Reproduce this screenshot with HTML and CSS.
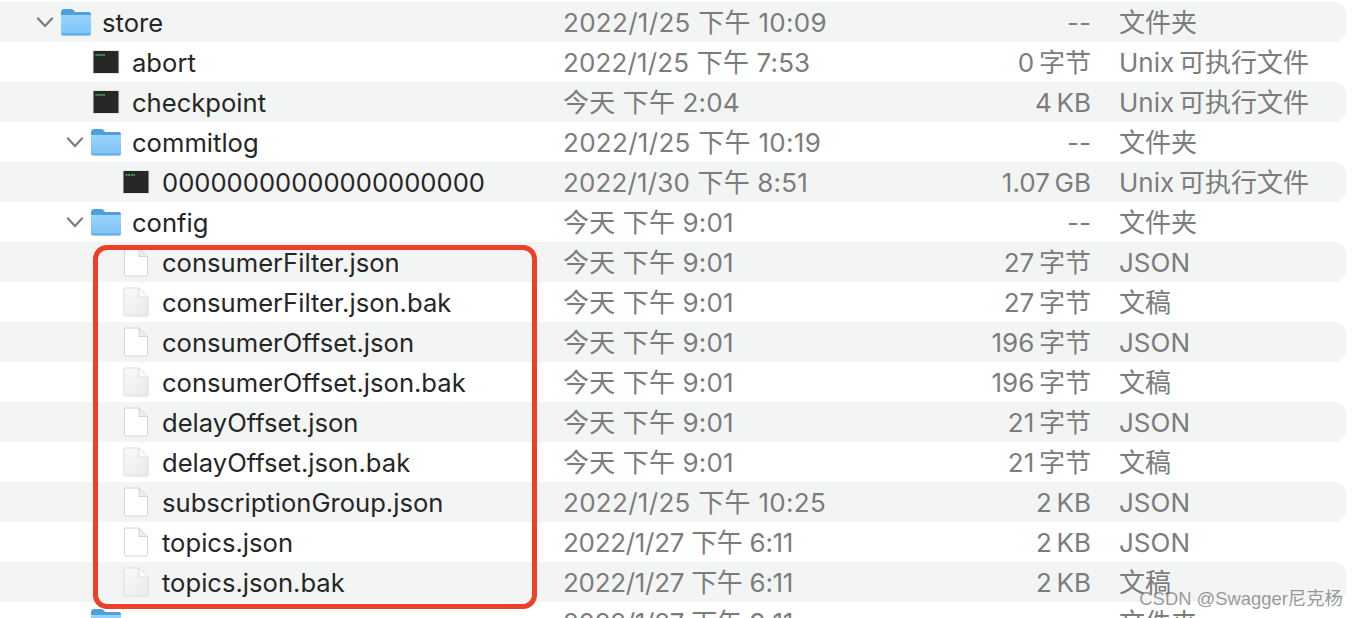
FILE: index.html
```html
<!DOCTYPE html>
<html lang="zh-CN">
<head>
  <meta charset="UTF-8" />
  <title>store</title>
  <meta name="viewport" content="width=device-width, initial-scale=1.0" />
  <link rel="stylesheet" href="styles.css">
</head>
<body>
  <svg class="defs" width="0" height="0">
    <defs>
      <linearGradient id="folderBody" x1="0" y1="0" x2="0" y2="1">
        <stop offset="0" stop-color="#97d4fc" />
        <stop offset="1" stop-color="#7cc4f7" />
      </linearGradient>
      <linearGradient id="bakPage" x1="0" y1="0" x2="1" y2="1">
        <stop offset="0" stop-color="#fbfbfb" />
        <stop offset="1" stop-color="#e9e9e9" />
      </linearGradient>
      <symbol id="chevron" viewBox="0 0 18 12">
        <path d="M2 2.5 L9 10 L16 2.5" fill="none" stroke="#808080" stroke-width="2.4" stroke-linecap="round" stroke-linejoin="round" />
      </symbol>
      <symbol id="folder" viewBox="0 0 32 30">
        <path d="M1 6 Q1 2 4 2 H11 Q13 2 14 3.500 L15 5 H29 Q31 5 31 8 V14 H1 Z" fill="#4f9fe0" />
        <path d="M1 8 H31 V26 Q31 28.500 28.500 28.500 H3.500 Q1 28.500 1 26 Z" fill="url(#folderBody)" />
        <path d="M1 26 H31 Q31 28.500 28.500 28.500 H3.500 Q1 28.500 1 26 Z" fill="#69b1ea" />
      </symbol>
      <symbol id="exec" viewBox="0 0 30 26">
        <rect x="1.500" y="1" width="27" height="24" fill="#e6e6e6" />
        <rect x="2.500" y="2" width="25" height="22" fill="#272727" />
        <path d="M4.500 6 H14" stroke="#58b85a" stroke-width="1.500" stroke-dasharray="2 .6" />
      </symbol>
      <symbol id="page" viewBox="0 0 26 30">
        <path d="M1.500 1 H16 L24.500 9.500 V27.500 Q24.500 29 23 29 H3 Q1.500 29 1.500 27.500 Z" fill="#fff" stroke="#d4d4d4" />
        <path d="M16 1 V9.500 H24.500 Z" fill="#ededed" stroke="#d4d4d4" stroke-linejoin="round" />
      </symbol>
      <symbol id="bak" viewBox="0 0 26 30">
        <path d="M1 1 H16 L25 10 V27.500 Q25 29 23.500 29 H2.500 Q1 29 1 27.500 Z" fill="url(#bakPage)" stroke="#dcdcdc" />
        <path d="M16 1 V10 H25 Z" fill="#fff" stroke="#dcdcdc" stroke-linejoin="round" />
      </symbol>
    </defs>
  </svg>

  <div class="list">
    <div class="row stripe depth0">
      <div class="name"><svg class="chevron"><use href="#chevron" /></svg><svg class="icon folder"><use href="#folder" /></svg><span>store</span></div>
      <div class="date wide">2022/1/25 下午 10:09</div><div class="size">--</div><div class="kind">文件夹</div>
    </div>
    <div class="row depth1">
      <div class="name"><svg class="icon exec"><use href="#exec" /></svg><span>abort</span></div>
      <div class="date">2022/1/25 下午 7:53</div><div class="size">0&#8201;字节</div><div class="kind">Unix&#8201;可执行文件</div>
    </div>
    <div class="row stripe depth1">
      <div class="name"><svg class="icon exec"><use href="#exec" /></svg><span>checkpoint</span></div>
      <div class="date">今天 下午 2:04</div><div class="size">4&#8201;KB</div><div class="kind">Unix&#8201;可执行文件</div>
    </div>
    <div class="row depth1">
      <div class="name"><svg class="chevron"><use href="#chevron" /></svg><svg class="icon folder"><use href="#folder" /></svg><span>commitlog</span></div>
      <div class="date wide">2022/1/25 下午 10:19</div><div class="size">--</div><div class="kind">文件夹</div>
    </div>
    <div class="row stripe depth2">
      <div class="name"><svg class="icon exec"><use href="#exec" /></svg><span>00000000000000000000</span></div>
      <div class="date">2022/1/30 下午 8:51</div><div class="size">1.07&#8201;GB</div><div class="kind">Unix&#8201;可执行文件</div>
    </div>
    <div class="row depth1">
      <div class="name"><svg class="chevron"><use href="#chevron" /></svg><svg class="icon folder"><use href="#folder" /></svg><span>config</span></div>
      <div class="date">今天 下午 9:01</div><div class="size">--</div><div class="kind">文件夹</div>
    </div>
    <div class="row stripe depth2">
      <div class="name"><svg class="icon page"><use href="#page" /></svg><span>consumerFilter.json</span></div>
      <div class="date">今天 下午 9:01</div><div class="size">27&#8201;字节</div><div class="kind">JSON</div>
    </div>
    <div class="row depth2">
      <div class="name"><svg class="icon page"><use href="#bak" /></svg><span>consumerFilter.json.bak</span></div>
      <div class="date">今天 下午 9:01</div><div class="size">27&#8201;字节</div><div class="kind">文稿</div>
    </div>
    <div class="row stripe depth2">
      <div class="name"><svg class="icon page"><use href="#page" /></svg><span>consumerOffset.json</span></div>
      <div class="date">今天 下午 9:01</div><div class="size">196&#8201;字节</div><div class="kind">JSON</div>
    </div>
    <div class="row depth2">
      <div class="name"><svg class="icon page"><use href="#bak" /></svg><span>consumerOffset.json.bak</span></div>
      <div class="date">今天 下午 9:01</div><div class="size">196&#8201;字节</div><div class="kind">文稿</div>
    </div>
    <div class="row stripe depth2">
      <div class="name"><svg class="icon page"><use href="#page" /></svg><span>delayOffset.json</span></div>
      <div class="date">今天 下午 9:01</div><div class="size">21&#8201;字节</div><div class="kind">JSON</div>
    </div>
    <div class="row depth2">
      <div class="name"><svg class="icon page"><use href="#bak" /></svg><span>delayOffset.json.bak</span></div>
      <div class="date">今天 下午 9:01</div><div class="size">21&#8201;字节</div><div class="kind">文稿</div>
    </div>
    <div class="row stripe depth2">
      <div class="name"><svg class="icon page"><use href="#page" /></svg><span>subscriptionGroup.json</span></div>
      <div class="date wide">2022/1/25 下午 10:25</div><div class="size">2&#8201;KB</div><div class="kind">JSON</div>
    </div>
    <div class="row depth2">
      <div class="name"><svg class="icon page"><use href="#page" /></svg><span>topics.json</span></div>
      <div class="date tight">2022/1/27 下午 6:11</div><div class="size">2&#8201;KB</div><div class="kind">JSON</div>
    </div>
    <div class="row stripe depth2">
      <div class="name"><svg class="icon page"><use href="#bak" /></svg><span>topics.json.bak</span></div>
      <div class="date tight">2022/1/27 下午 6:11</div><div class="size">2&#8201;KB</div><div class="kind">文稿</div>
    </div>
    <div class="row depth1">
      <div class="name"><svg class="icon folder"><use href="#folder" /></svg><span>consumequeue</span></div>
      <div class="date tight">2022/1/27 下午 9:11</div><div class="size">--</div><div class="kind">文件夹</div>
    </div>
  </div>

  <div class="redbox"></div>
  <div class="watermark">CSDN @Swagger尼克杨</div>
</body>
</html>
```

FILE: styles.css
```css
html, body {
  height: 100%;
}
body {
  font-family: Inter, "Noto Sans CJK SC", sans-serif;
  background: #fff;
  color: #262626;
  margin: 0;
  overflow: hidden;
  position: relative;
}
.defs {
  position: absolute;
}
.list {
  padding: 2px 12px 0 0;
}
.row {
  display: grid;
  grid-template-columns: 563px 370px 158px 255px;
  height: 40px;
  align-items: start;
  font-size: 25.6px;
  line-height: 42px;
  white-space: nowrap;
}
.stripe {
  background: #f3f5f4;
  border-radius: 0 12px 12px 0;
}
.name {
  display: flex;
  align-items: flex-start;
  height: 40px;
  position: relative;
}
.depth0 .name {
  padding-left: 102px;
}
.depth1 .name {
  padding-left: 132px;
}
.depth2 .name {
  padding-left: 162px;
}
.chevron {
  position: absolute;
  align-self: center;
  width: 18px;
  height: 12px;
  margin-left: -66px;
}
.icon {
  position: absolute;
  align-self: center;
}
.folder {
  width: 32px;
  height: 30px;
  margin-left: -42px;
}
.exec {
  width: 30px;
  height: 26px;
  margin-left: -41px;
}
.page {
  width: 26px;
  height: 30px;
  margin-left: -39px;
}
.date, .size, .kind {
  color: #7c7c7c;
  font-size: 26px;
}
.date {
  letter-spacing: 0.15px;
}
.date.wide {
  letter-spacing: 0.3px;
}
.date.tight {
  letter-spacing: -0.3px;
}
.size {
  text-align: right;
}
.kind {
  padding-left: 28px;
}
.redbox {
  position: absolute;
  left: 93px;
  top: 245px;
  width: 434px;
  height: 354px;
  border: 5px solid #ee3f28;
  border-radius: 14px;
}
.watermark {
  position: absolute;
  right: 15px;
  top: 587px;
  font-family: "Liberation Sans", "Noto Sans CJK SC", sans-serif;
  font-size: 18.4px;
  line-height: 24px;
  color: rgba(110, 110, 110, 0.7);
}
```
